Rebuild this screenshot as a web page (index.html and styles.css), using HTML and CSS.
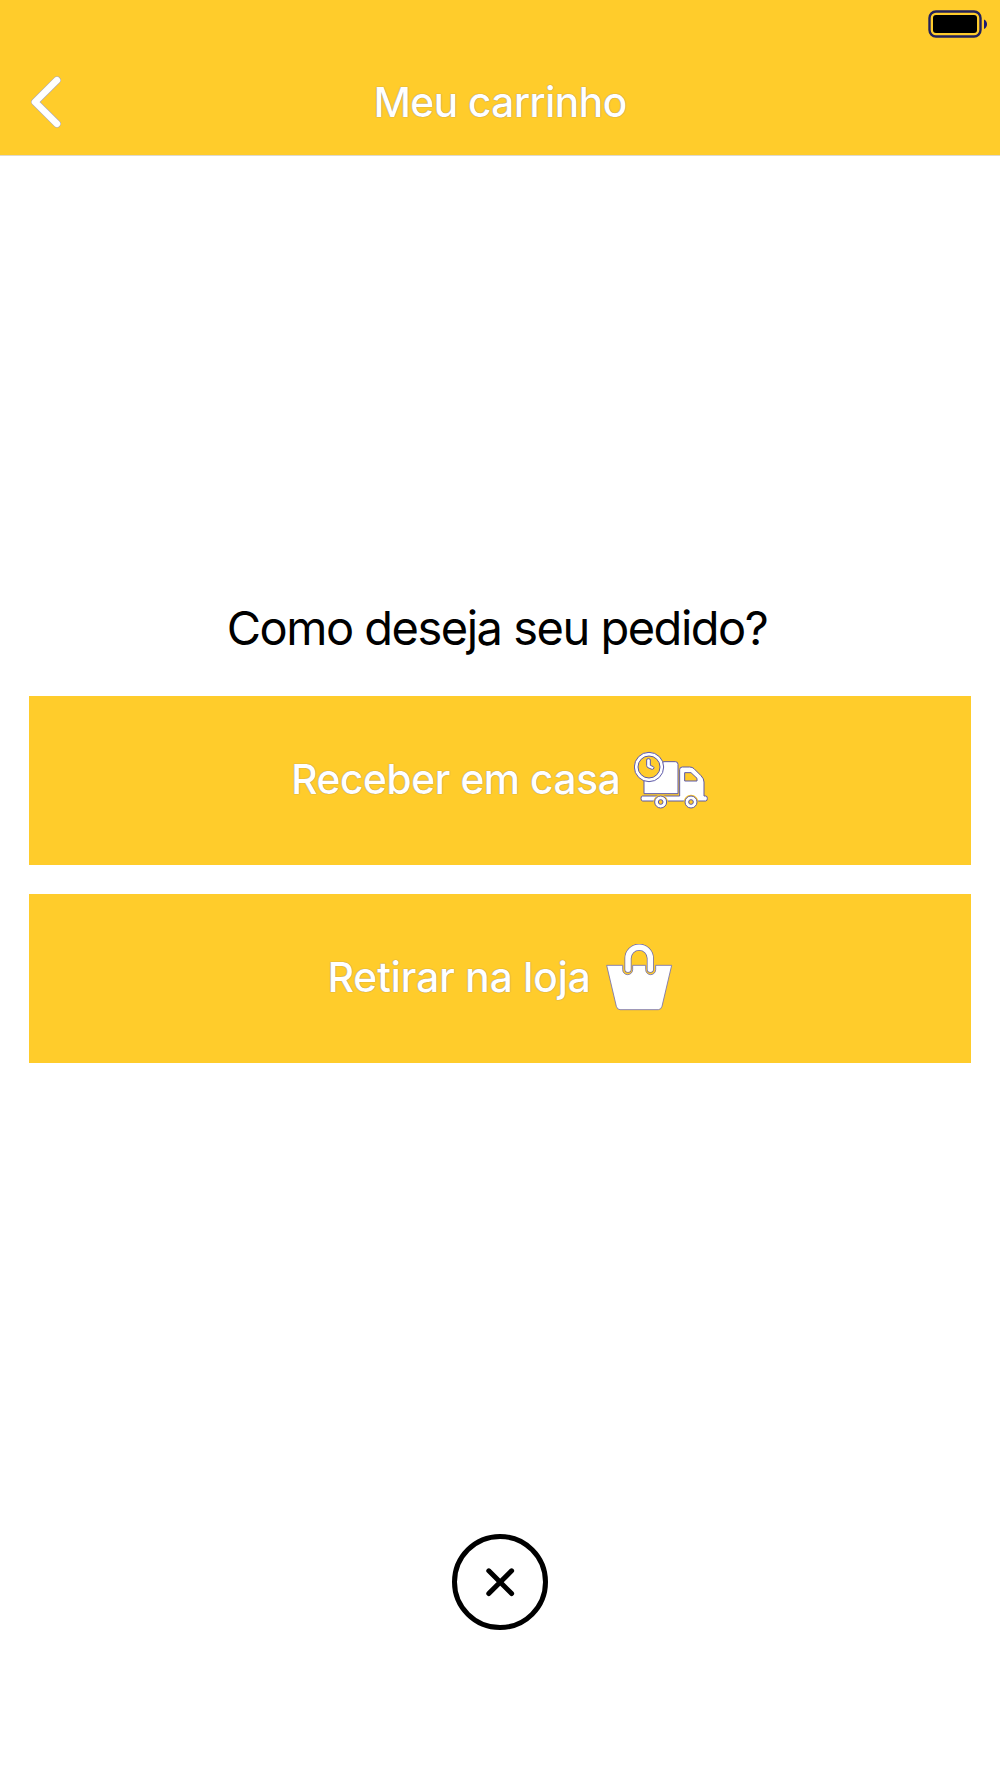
FILE: index.html
```html
<!DOCTYPE html>
<html lang="pt-BR">
<head>
    <meta charset="UTF-8">
    <meta name="viewport" content="width=device-width, initial-scale=1.0">
    <title>Meu carrinho</title>
    <link rel="stylesheet" href="styles.css">
</head>
<body>
    <header class="header">
        <div class="status-bar">
            <svg class="battery" viewBox="0 0 60 28" aria-hidden="true">
                <rect x="1.5" y="1.5" width="51" height="25" rx="6.5" fill="none" stroke="#22205c" stroke-width="2.4"/>
                <rect x="5" y="5" width="44" height="18" rx="3" fill="#000"/>
                <path d="M56 9.500c4 1.500 4 8 0 9.500z" fill="#1c1a70"/>
            </svg>
        </div>
        <nav class="nav-bar">
            <a class="back" href="#" aria-label="Voltar">
                <svg viewBox="0 0 32 54" aria-hidden="true">
                    <path d="M27 5.200L5 27L27 48.800" fill="none" stroke="#a9a6b8" stroke-width="7.600" stroke-linecap="round" stroke-linejoin="round"/>
                    <path d="M27 5.200L5 27L27 48.800" fill="none" stroke="#fff" stroke-width="6.600" stroke-linecap="round" stroke-linejoin="round"/>
                </svg>
            </a>
            <h1>Meu carrinho</h1>
        </nav>
    </header>

    <main class="content">
        <h2>Como deseja seu pedido?</h2>
        <button class="option delivery" type="button">
            <span>Receber em casa</span>
            <svg class="truck" viewBox="72 63 222 174" aria-hidden="true">
                <g fill="#fff" stroke="#5c58a8" stroke-width="3" stroke-linejoin="round">
                    <path d="M102 191V120L162 95H196Q204 95 204 103V191Z"/>
                    <path d="M98 198H209V119Q209 111 217 111H239Q247 111 252 116L273 137Q282 146 282 156V198H287Q292 198 292 205Q292 213 287 213H98Q93 213 93 205Q93 198 98 198Z"/>
                    <path d="M224 128H243L261 145V153H224Z" fill="#ffcc2b"/>
                    <circle cx="117" cy="111" r="44"/>
                    <circle cx="117" cy="111" r="33" fill="#ffcc2b"/>
                    <path d="M110 90Q110 86 115 86Q121 86 121 90V106L130 110Q134 113 130 117Q127 119 123 117L114 113Q110 111 110 107Z"/>
                </g>
                <path d="M132 217A20 20 0 0 1 172 217M223 217A20 20 0 0 1 263 217" fill="none" stroke="#ffcc2b" stroke-width="5"/>
                <g fill="#fff" stroke="#5c58a8" stroke-width="3">
                    <circle cx="152" cy="216" r="18"/>
                    <circle cx="243" cy="216" r="18"/>
                    <circle cx="152" cy="216" r="7" fill="#ffcc2b"/>
                    <circle cx="243" cy="216" r="7" fill="#ffcc2b"/>
                </g>
            </svg>
        </button>
        <button class="option pickup" type="button">
            <span>Retirar na loja</span>
            <svg class="bag" viewBox="45 42 201 201" aria-hidden="true">
                <path d="M47 106H95V119A15 15 0 0 0 125 119V106H164V119A15 15 0 0 0 194 119V106H242L213 229Q210 239 202 239H87Q79 239 76 229Z" fill="#fff" stroke="#7370b0" stroke-width="2.500" stroke-linejoin="round"/>
                <path d="M111 118V85A33.500 33.500 0 0 1 178 85V118" fill="none" stroke="#6c69ad" stroke-width="21" stroke-linecap="round"/>
                <path d="M111 118V85A33.500 33.500 0 0 1 178 85V118" fill="none" stroke="#fff" stroke-width="16.500" stroke-linecap="round"/>
            </svg>
        </button>
    </main>

    <footer class="footer">
        <button class="close" type="button" aria-label="Fechar">
            <svg viewBox="0 0 96 96" aria-hidden="true">
                <circle cx="48" cy="48" r="45.500" fill="none" stroke="#000" stroke-width="5"/>
                <path d="M36.800 36.800L59.600 59.600M59.600 36.800L36.800 59.600" stroke="#000" stroke-width="5" stroke-linecap="round"/>
            </svg>
        </button>
    </footer>
</body>
</html>
```

FILE: styles.css
```css
* {
    box-sizing: border-box;
}
body {
    font-family: Inter, "Liberation Sans", sans-serif;
    background-color: #fff;
    display: flex;
    flex-direction: column;
    height: 1778px;
    margin: 0;
}
h1,
h2 {
    margin: 0;
}
button {
    border: none;
    padding: 0;
    font-family: inherit;
    cursor: pointer;
}
svg {
    display: block;
    flex-shrink: 0;
}

/* Header */
.header {
    height: 156px;
    background-color: #ffcc2b;
    border-bottom: 1px solid #ded9cc;
}
.status-bar {
    display: flex;
    justify-content: flex-end;
    height: 48px;
    padding: 10px 12px 0 0;
}
.battery {
    width: 60px;
    height: 28px;
}
.nav-bar {
    display: grid;
    grid-template-columns: 100px 1fr 100px;
    align-items: center;
    height: 107px;
}
.back {
    padding-left: 30px;
}
.back svg {
    width: 32px;
    height: 54px;
}
.nav-bar h1 {
    color: #fff;
    font-size: 41px;
    font-weight: 500;
    line-height: 48px;
    letter-spacing: -0.7px;
    text-align: center;
    white-space: nowrap;
    text-shadow: 0 0 1px rgba(70, 65, 150, 0.8);
}

/* Options */
.content {
    display: flex;
    flex-direction: column;
    gap: 29px;
    padding: 442px 29px 0;
}
.content h2 {
    font-size: 47px;
    font-weight: 400;
    line-height: 60px;
    letter-spacing: -1.5px;
    margin-bottom: 9px;
    padding-right: 6px;
    color: #000;
    text-align: center;
    white-space: nowrap;
}
.option {
    display: flex;
    align-items: center;
    justify-content: center;
    height: 169px;
    background-color: #ffcc2b;
    color: #fff;
    font-size: 41px;
    font-weight: 500;
    white-space: nowrap;
    text-shadow: 0 0 1px rgba(70, 65, 150, 0.8);
}
.option span {
    padding-bottom: 4px;
}
.delivery {
    letter-spacing: -0.6px;
    padding-right: 1px;
}
.pickup {
    letter-spacing: -0.3px;
}
.truck {
    width: 74px;
    height: 58px;
    margin: 0 0 2px 14px;
}
.bag {
    width: 67px;
    height: 67px;
    margin: 0 0 2px 15px;
}

/* Close button */
.footer {
    display: flex;
    justify-content: center;
    margin-top: auto;
    padding-bottom: 148px;
}
.close {
    width: 96px;
    height: 96px;
    background: none;
}
```
